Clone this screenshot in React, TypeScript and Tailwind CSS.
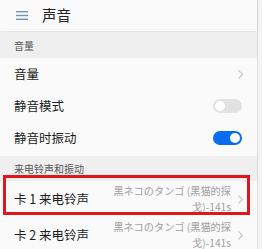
import React from "react";

const font = { fontFamily: '"Noto Sans CJK SC", "Noto Sans", sans-serif' };

function Chevron() {
  return (
    <svg width="7" height="11" viewBox="0 0 7 11" className="shrink-0">
      <path d="M1.5 1.5l4 4-4 4" fill="none" stroke="#c8c8c8" strokeWidth="1.1" />
    </svg>
  );
}

function Toggle({ on }: { on: boolean }) {
  return on ? (
    <div className="w-[29px] h-[14px] rounded-full bg-[#0a6cf0] flex items-center justify-end pr-[2px]">
      <div className="w-[10px] h-[10px] rounded-full bg-white" />
    </div>
  ) : (
    <div className="w-[29px] h-[14px] rounded-full bg-[#e2e2e2] flex items-center pl-[2px]">
      <div className="w-[10px] h-[10px] rounded-full bg-white" />
    </div>
  );
}

function Ringtone({ label, boxed }: { label: string; boxed?: boolean }) {
  return (
    <div className="relative h-[36px] shrink-0 flex items-center justify-between pl-[14px] pr-[13px]">
      <span className="text-[12.5px] text-[#1c1c1c] whitespace-nowrap">{label}</span>
      <div className="flex items-center gap-[6px]">
        <div className="text-[10.2px] leading-[16px] text-[#a0a0a0] text-right whitespace-nowrap">
          <div>黑ネコのタンゴ (黑猫的探</div>
          <div>戈)-141s</div>
        </div>
        <Chevron />
      </div>
      {boxed && (
        <div className="absolute left-[3px] top-[-6px] w-[247px] h-[40px] border-[3px] border-[#e0161a]" />
      )}
    </div>
  );
}

export default function App() {
  return (
    <div className="w-[262px] h-[249px] overflow-hidden bg-[#f4f4f4] flex" style={font}>
      <div className="w-[258px] h-full bg-[#fafafa] border-r border-[#dedede] flex flex-col">
        <div className="h-[31px] shrink-0 flex items-center pl-[16px] shadow-[0_1px_2px_rgba(0,0,0,0.12)] bg-[#fafafa] relative z-10">
          <svg width="12" height="9" viewBox="0 0 12 9">
            <rect x="0" y="0" width="12" height="1.4" fill="#6b95b8" />
            <rect x="0" y="3.8" width="12" height="1.4" fill="#6b95b8" />
            <rect x="0" y="7.6" width="12" height="1.4" fill="#6b95b8" />
          </svg>
          <span className="ml-[14px] text-[14.5px] text-[#222] leading-none">声音</span>
        </div>
        <div className="h-[25px] mt-[2px] shrink-0 bg-[#efefef] flex items-center pl-[14px] text-[10px] text-[#555]">音量</div>
        <div className="h-[32px] shrink-0 flex items-center justify-between pl-[14px] pr-[13px] text-[12.5px] text-[#1c1c1c]">
          <span>音量</span>
          <Chevron />
        </div>
        <div className="ml-[14px] h-px bg-[#ececec]" />
        <div className="h-[32px] shrink-0 flex items-center justify-between pl-[14px] pr-[15px] text-[12.5px] text-[#1c1c1c]">
          <span>静音模式</span>
          <Toggle on={false} />
        </div>
        <div className="ml-[14px] h-px bg-[#ececec]" />
        <div className="h-[32px] shrink-0 flex items-center justify-between pl-[14px] pr-[15px] text-[12.5px] text-[#1c1c1c]">
          <span>静音时振动</span>
          <Toggle on={true} />
        </div>
        <div className="h-[25px] mt-[2px] shrink-0 bg-[#efefef] flex items-center pl-[14px] text-[10px] text-[#555]">来电铃声和振动</div>
        <Ringtone label="卡 1 来电铃声" boxed />
        <div className="ml-[14px] h-px bg-[#ececec]" />
        <Ringtone label="卡 2 来电铃声" />
      </div>
    </div>
  );
}
